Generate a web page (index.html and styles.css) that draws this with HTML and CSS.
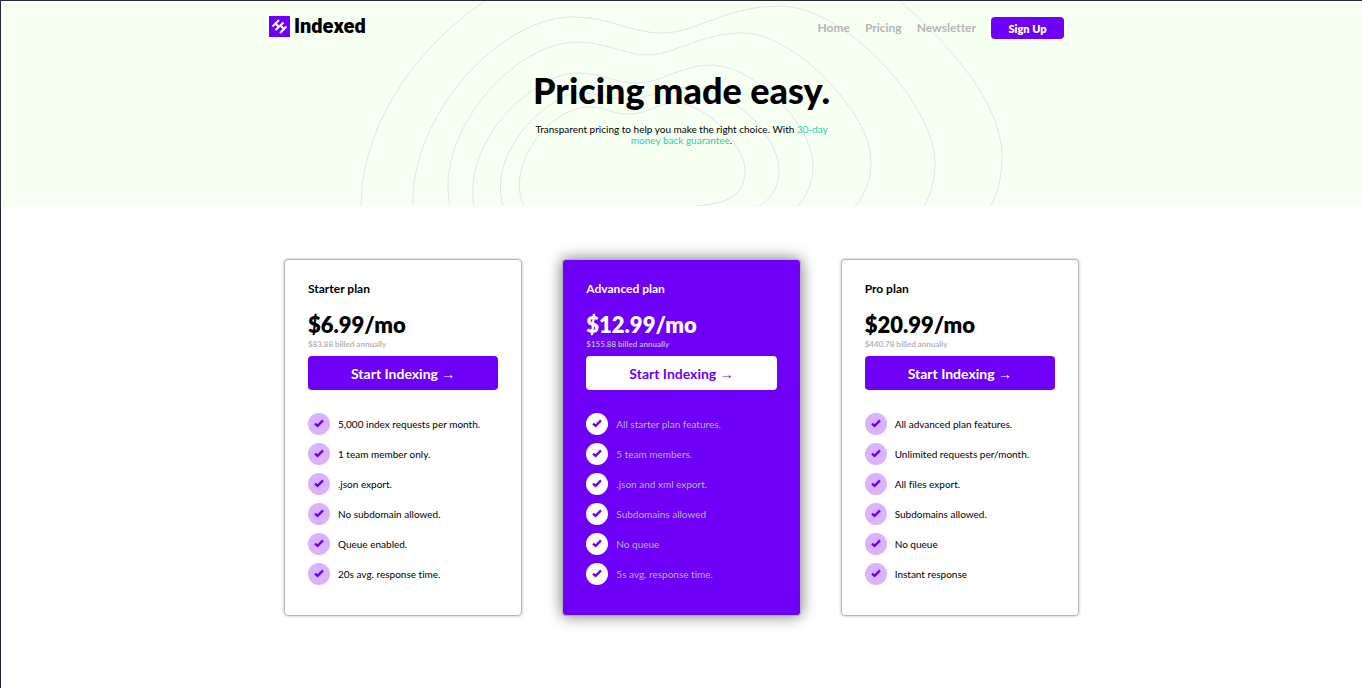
FILE: index.html
```html
<!DOCTYPE html>
<html lang="en">
<head>
<meta charset="utf-8">
<meta name="viewport" content="width=device-width, initial-scale=1">
<title>Indexed – Pricing</title>
<link rel="stylesheet" href="styles.css">
</head>
<body>
<svg class="sprite" aria-hidden="true">
  <symbol id="check" viewBox="0 0 22 22"><path d="M7 10.600 9.600 12.900 15 7.400" fill="none" stroke="#6f00f8" stroke-width="2.300"/></symbol>
</svg>
<header class="hero">
  <svg class="contours" viewBox="350 1 663 205" aria-hidden="true">
    <path d="M485 1C412 50 361 130 361 206"/>
    <path d="M900 1C955 50 1002 105 1002 158C1002 175 998 192 991 206"/>
    <path d="M413 206C410 115 500 17 573 17C610 17 630 33 662 33C697 33 725 6 780 6C845 6 935 105 935 163C935 180 931 194 924 206"/>
    <path d="M450 206C434 132 515 42 577 42C605 42 625 55 648 55C674 55 700 33 743 33C795 33 871 115 871 160C871 180 865 195 855 206"/>
    <path d="M474 206C462 140 535 73 577 73C600 73 615 83 637 83C660 83 683 65 710 65C755 65 813 125 813 166C813 182 807 196 798 206"/>
    <path d="M503 206C487 150 550 93 580 93C600 93 610 99 627 99C650 99 665 87 688 87C730 87 779 135 779 170C779 187 772 198 759 206"/>
    <path d="M524 206C505 167 548 107 590 107C605 107 612 114 628 114C648 114 655 103 677 103C705 103 745 145 745 170C745 198 725 203 697 206"/>
  </svg>
  <nav class="nav">
    <a class="brand" href="#">
      <svg class="brand-mark" viewBox="0 0 21 21" aria-hidden="true">
        <rect width="21" height="21" fill="#6f00f8"/>
        <path d="M3.500 10.500 10 4M6.500 14 14.500 6.500M11 17 17.500 10.500M6.500 7.500 9.500 10.500M11.500 9.500 14.500 12.500" fill="none" stroke="#fff" stroke-width="2"/>
      </svg>
      <span class="brand-name">Indexed</span>
    </a>
    <ul class="links">
      <li><a href="#">Home</a></li>
      <li><a href="#">Pricing</a></li>
      <li><a href="#">Newsletter</a></li>
      <li><button class="signup" type="button">Sign Up</button></li>
    </ul>
  </nav>
  <div class="intro">
    <h1>Pricing made easy.</h1>
    <p>Transparent pricing to help you make the right choice. With <span class="accent"><span class="term">30-day</span> money back guarantee</span>.</p>
  </div>
</header>
<main class="plans">
  <section class="card">
    <h2>Starter plan</h2>
    <p class="price">$6.99/mo</p>
    <p class="billed">$83.88 billed annually</p>
    <button class="start" type="button">Start Indexing <span class="arrow">→</span></button>
    <ul class="features">
      <li><svg class="tick"><use href="#check"/></svg>5,000 index requests per month.</li>
      <li><svg class="tick"><use href="#check"/></svg>1 team member only.</li>
      <li><svg class="tick"><use href="#check"/></svg>.json export.</li>
      <li><svg class="tick"><use href="#check"/></svg>No subdomain allowed.</li>
      <li><svg class="tick"><use href="#check"/></svg>Queue enabled.</li>
      <li><svg class="tick"><use href="#check"/></svg>20s avg. response time.</li>
    </ul>
  </section>
  <section class="card featured">
    <h2>Advanced plan</h2>
    <p class="price">$12.99/mo</p>
    <p class="billed">$155.88 billed annually</p>
    <button class="start" type="button">Start Indexing <span class="arrow">→</span></button>
    <ul class="features">
      <li><svg class="tick"><use href="#check"/></svg>All starter plan features.</li>
      <li><svg class="tick"><use href="#check"/></svg>5 team members.</li>
      <li><svg class="tick"><use href="#check"/></svg>.json and xml export.</li>
      <li><svg class="tick"><use href="#check"/></svg>Subdomains allowed</li>
      <li><svg class="tick"><use href="#check"/></svg>No queue</li>
      <li><svg class="tick"><use href="#check"/></svg>5s avg. response time.</li>
    </ul>
  </section>
  <section class="card">
    <h2>Pro plan</h2>
    <p class="price">$20.99/mo</p>
    <p class="billed">$440.78 billed annually</p>
    <button class="start" type="button">Start Indexing <span class="arrow">→</span></button>
    <ul class="features">
      <li><svg class="tick"><use href="#check"/></svg>All advanced plan features.</li>
      <li><svg class="tick"><use href="#check"/></svg>Unlimited requests per/month.</li>
      <li><svg class="tick"><use href="#check"/></svg>All files export.</li>
      <li><svg class="tick"><use href="#check"/></svg>Subdomains allowed.</li>
      <li><svg class="tick"><use href="#check"/></svg>No queue</li>
      <li><svg class="tick"><use href="#check"/></svg>Instant response</li>
    </ul>
  </section>
</main>
</body>
</html>
```
FILE: styles.css
```css
* { box-sizing: border-box; }
body {
  margin: 0;
  min-height: 100vh;
  border-top: 1px solid #2b2737;
  border-left: 1px solid #2b2737;
  background: #fff;
  color: #000;
  font-family: Lato, sans-serif;
  font-size: 10px;
  line-height: 12px;
  font-variant-ligatures: none;
}
h1, h2, p, ul { margin: 0; padding: 0; }
ul { list-style: none; }
a { color: inherit; text-decoration: none; }
button { border: 0; padding: 0; font-family: inherit; font-weight: 700; cursor: pointer; }
.sprite { position: absolute; width: 0; height: 0; }

.hero { position: relative; padding: 15px 0 60px; background: #f7fff3; overflow: hidden; }
.contours {
  position: absolute;
  top: 0;
  left: 50%;
  width: 663px;
  height: 205px;
  margin-left: -332px;
  fill: none;
  stroke: #dfe5e7;
  stroke-width: 1;
}
.nav {
  position: relative;
  display: flex;
  justify-content: space-between;
  align-items: flex-start;
  max-width: 825px;
  margin: 0 auto;
  padding-right: 30px;
}
.brand { display: flex; align-items: center; gap: 4px; }
.brand-mark { width: 21px; height: 21px; }
.brand-name { font-family: Roboto, sans-serif; font-size: 20px; line-height: 21px; font-weight: 900; }
.links { display: flex; align-items: center; gap: 15px; padding-top: 1px; color: #b5b5b5; font-size: 12px; font-weight: 700; }
.signup { display: block; width: 73px; height: 22px; border-radius: 4px; background: #6f00f8; color: #fff; font-size: 11px; font-weight: 800; }

.intro { position: relative; max-width: 310px; margin: 0 auto; padding-top: 28px; text-align: center; }
h1 { font-size: 36px; line-height: 46px; font-weight: 900; white-space: nowrap; }
.intro p { padding-top: 11px; line-height: 11px; }
.accent { color: #1bcfae; }
.term { white-space: nowrap; }

.plans {
  display: grid;
  grid-template-columns: repeat(auto-fit, minmax(220px, 1fr));
  gap: 40px;
  max-width: 795px;
  margin: 53px auto;
}
.card { padding: 22px 23px; border: 1px solid #b5b5b5; border-radius: 4px; box-shadow: 0 0 3px #b5b5b5; }
h2 { font-size: 12px; line-height: 14px; font-weight: 700; }
.price { padding-top: 15px; font-size: 22px; line-height: 28px; font-weight: 800; }
.billed { color: #b5b5b5; font-size: 8px; line-height: 10px; font-weight: 700; }
.start {
  display: block;
  width: 100%;
  height: 34px;
  margin-top: 7px;
  border-radius: 4px;
  background: #6f00f8;
  color: #fff;
  font-size: 14px;
}
.arrow { font-family: "Liberation Sans", sans-serif; font-weight: 400; }
.features { display: grid; gap: 8px; padding: 23px 0 8px; }
.features li { display: flex; align-items: center; gap: 8px; }
.tick { width: 22px; height: 22px; border-radius: 50%; background: #d9b3fd; }

.featured { background: #6f00f8; color: #fff; box-shadow: 0 0 15px #777; }
.featured .start { background: #fff; color: #6f00f8; }
.featured .features { color: #b5b5b5; }
.featured .tick { background: #fff; }
```
